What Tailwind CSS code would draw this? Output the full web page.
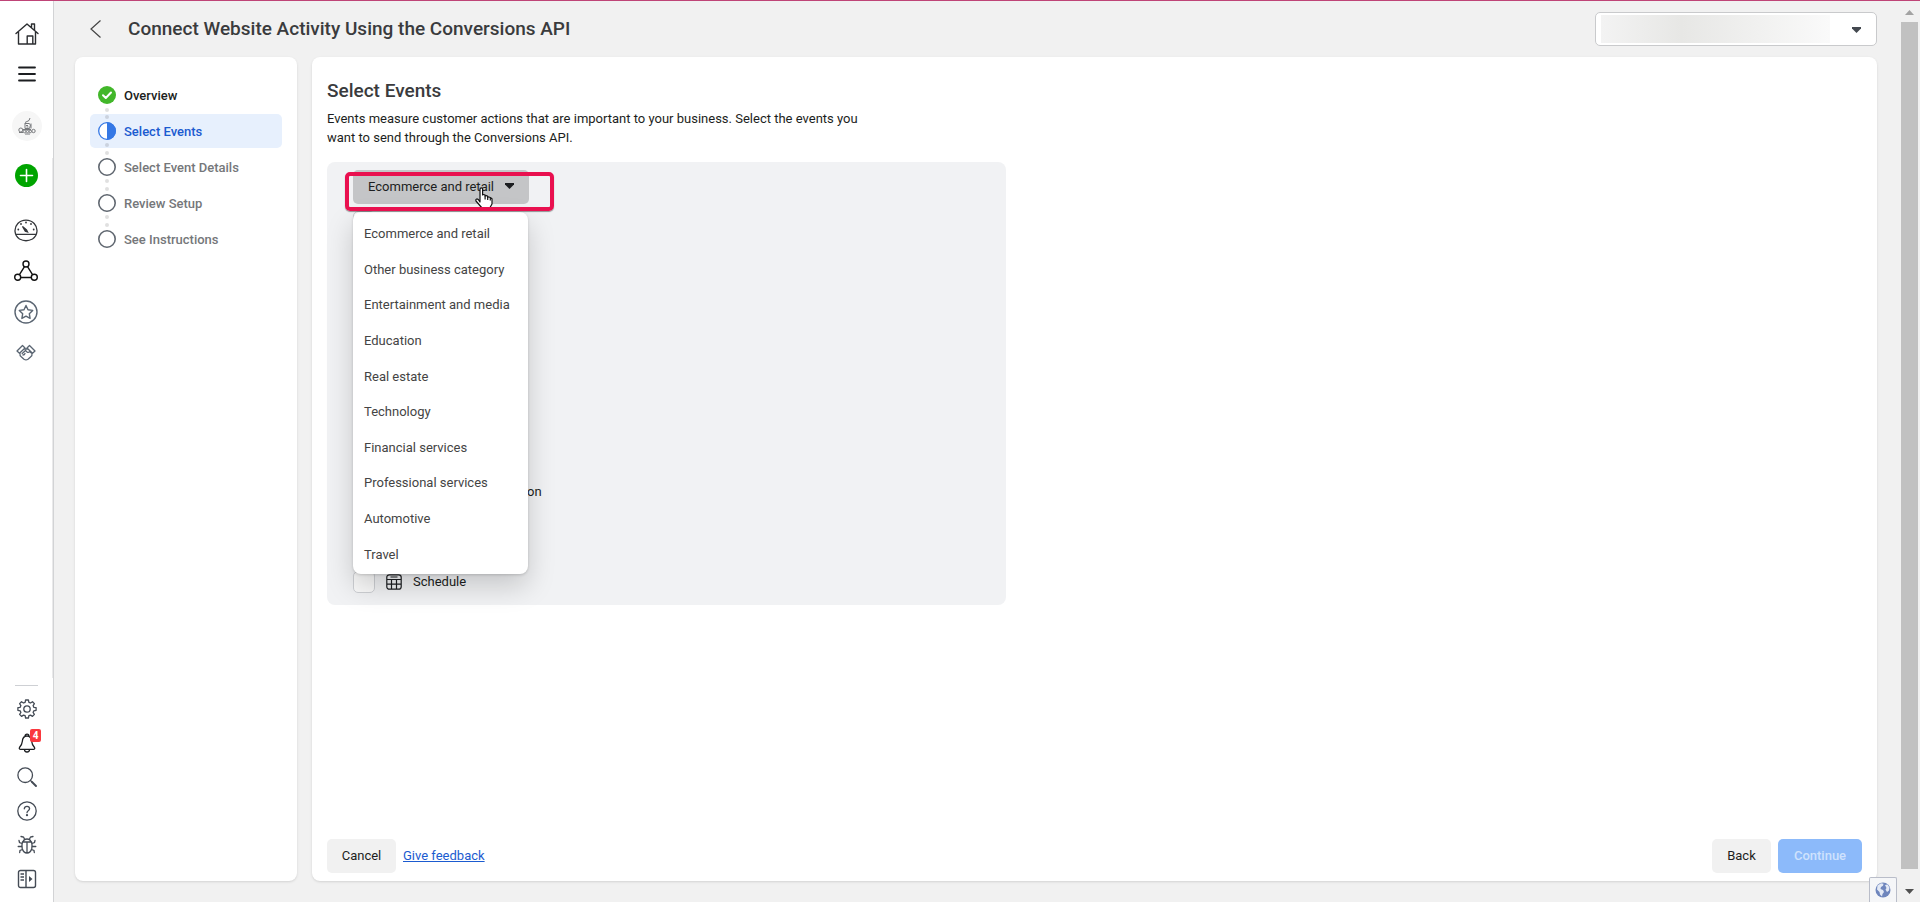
<!DOCTYPE html>
<html lang="en">
<head>
  <meta charset="UTF-8" />
  <meta name="viewport" content="width=device-width, initial-scale=1.0"/>
  <title>Connect Website Activity | Events Manager</title>
  <script src="https://cdn.jsdelivr.net/npm/@tailwindcss/browser@4"></script>
</head>
<body class="h-screen flex flex-col overflow-hidden border-t border-[#bf4477] bg-[#f1f1f1] font-['Roboto',sans-serif] text-[13px] leading-[19px] text-[#1c1e21]">

  <div class="flex flex-1 min-h-0">

    <!-- Sidebar -->
    <nav class="w-[54px] shrink-0 flex flex-col bg-white border-r border-[#d2d3d5] pt-[13px] pb-[6px] text-[#444b55]">
      <a href="#" aria-label="Home" class="h-10 flex items-center justify-center text-[#2b2d30]">
        <svg class="w-6 h-6" viewBox="0 0 24 24" fill="none" stroke="currentColor" stroke-width="1.4" stroke-linejoin="round" stroke-linecap="round"><path d="M1 11.500L12 2l11 9.500M3.500 10v12h17V10M16.500 5.500V2h3v6.200M12.200 22v-8h5.600v8"/></svg>
      </a>
      <button aria-label="Menu" class="h-10 flex items-center justify-center text-[#1c1e21]">
        <svg class="w-[18px] h-4" viewBox="0 0 18 16" fill="none" stroke="currentColor" stroke-width="1.800" stroke-linecap="round"><path d="M1 1.500h16M1 8h16M1 14.500h16"/></svg>
      </button>
      <a href="#" aria-label="Account" class="h-16 flex items-center justify-center">
        <span class="w-[30px] h-[30px] rounded-full bg-[#f6f6f6] flex items-center justify-center text-[#77797c]">
          <svg class="w-[18px] h-[18px]" viewBox="0 0 18 18" fill="none" stroke="currentColor" stroke-width="1"><path d="M7 5.500l4-2 1-2.500M6.500 6.500h5M7 7v4.500h4.500l1-3.500-1.500-1.500M8 8.500h2M8.500 10h2M5 12.500h8M13 6.500v5"/><circle cx="2.800" cy="13" r="2"/><circle cx="6.500" cy="14.500" r="1.300"/><circle cx="9.500" cy="14.500" r="1.200"/><circle cx="12.300" cy="14.500" r="1.200"/><circle cx="15.500" cy="14" r="1.700"/><path d="M1 15.500h4M7 17h5" /></svg>
        </span>
      </a>

      <div class="flex-1 flex flex-col border-r border-[#e9e9ea] mb-[7px]">
        <button aria-label="Create" class="h-[35px] mb-4 flex items-center justify-center">
          <svg class="w-[23px] h-[23px]" viewBox="0 0 23 23"><circle cx="11.500" cy="11.500" r="11.500" fill="#00a400"/><path d="M11.500 5.500v12M5.500 11.500h12" stroke="#fff" stroke-width="1.600" stroke-linecap="round"/></svg>
        </button>
        <a href="#" aria-label="Overview" class="h-[41px] flex items-center justify-center text-[#33363a]">
          <svg class="w-6 h-6" viewBox="0 0 24 24" fill="none" stroke="currentColor" stroke-width="1.300"><path d="M5.500 21a11 10.500 0 1 1 13 0q-6.500 3.500-13 0zM1.800 16.300h20.400"/><path d="M8.500 8.500l4 3.500 1 2-2.200-.7z" fill="currentColor"/><g fill="currentColor" stroke="none"><circle cx="12" cy="4.500" r=".9"/><circle cx="7" cy="6" r=".9"/><circle cx="17" cy="6" r=".9"/><circle cx="4.300" cy="11.500" r=".9"/><circle cx="19.700" cy="11.500" r=".9"/></g></svg>
        </a>
        <a href="#" aria-label="Data sources" class="h-[41px] flex items-center justify-center text-[#111]">
          <svg class="w-6 h-6" viewBox="0 0 24 24" fill="none" stroke="currentColor" stroke-width="1.400"><circle cx="12" cy="5" r="3"/><circle cx="3.700" cy="18.300" r="3"/><circle cx="20.300" cy="18.300" r="3"/><path d="M10.500 7.600L5.300 15.800M13.500 7.600l5.200 8.200M6.700 18.500h10.600"/></svg>
        </a>
        <a href="#" aria-label="Custom conversions" class="h-[41px] flex items-center justify-center text-[#5a6572]">
          <svg class="w-6 h-6" viewBox="0 0 24 24" fill="none" stroke="currentColor" stroke-width="1.400" stroke-linejoin="round"><circle cx="12" cy="12" r="11"/><path d="M12 5.500l2 4.300 4.700.6-3.400 3.300.8 4.700-4.100-2.300-4.100 2.300.8-4.700-3.400-3.300 4.700-.6z"/></svg>
        </a>
        <a href="#" aria-label="Partner integrations" class="h-[41px] flex items-center justify-center text-[#5a6572]">
          <svg class="w-5 h-5" viewBox="0 0 20 20" fill="none" stroke="currentColor" stroke-width="1.300" stroke-linejoin="round" stroke-linecap="round"><path d="M1 8l5.500-5.500L9 5 3.500 10.300zM19 8l-5.500-5.500L11 5l5.500 5.300zM4 10.500q-.5 2 1.500 3.500l2.500 2.300q2 1.200 4 0l2.500-2.300q2-1.500 1.500-3.500M8.500 6h3M6.200 10.500l3.300-3 1.500 1.500q1.500 1 2.500-.5l2.500 2M7 12q1.500 0 2-1.500"/></svg>
        </a>
      </div>

      <div class="mx-[15px] mb-[6px] h-px bg-[#ced0d4]"></div>
      <button aria-label="Settings" class="h-[34px] flex items-center justify-center">
        <svg class="w-5 h-5" viewBox="0 0 20 20" fill="none" stroke="currentColor" stroke-width="1.300" stroke-linejoin="round"><circle cx="10" cy="10" r="3.200"/><path d="M8.600 1h2.800l.5 2.300 1.600.7 2-1.300 1.900 1.900-1.300 2 .7 1.700 2.300.4v2.600l-2.300.5-.7 1.700 1.300 1.900-1.900 2-2-1.300-1.600.6-.5 2.300H8.600l-.5-2.300-1.600-.6-2 1.300-1.900-2 1.300-1.900-.7-1.700L.9 11.300V8.700l2.300-.4.7-1.700-1.300-2 1.900-1.900 2 1.300 1.600-.7z"/></svg>
      </button>
      <button aria-label="Notifications" class="relative h-[34px] flex items-center justify-center text-[#1c1e21]">
        <svg class="w-5 h-5" viewBox="0 0 20 20" fill="none" stroke="currentColor" stroke-width="1.300" stroke-linejoin="round"><path d="M8 3.200a2 2 0 0 1 4 0M10 3c-3.500 0-4.500 2.500-4.700 5.500-.2 2.700-1.500 4.500-2.800 6-.6 1 0 1.800 1 1.800h13c1 0 1.600-.8 1-1.800-1.300-1.500-2.600-3.300-2.800-6C14.500 5.500 13.500 3 10 3zM7.500 16.500a2.500 2.500 0 0 0 5 0"/></svg>
        <span class="absolute left-[30px] top-[3px] w-[11px] h-[13px] rounded-[2px] bg-[#fa383e] text-white text-[10px] leading-[13px] font-bold text-center">4</span>
      </button>
      <button aria-label="Search" class="h-[34px] flex items-center justify-center">
        <svg class="w-5 h-5" viewBox="0 0 20 20" fill="none" stroke="currentColor" stroke-width="1.300" stroke-linecap="round"><circle cx="8.200" cy="8.200" r="7.300"/><path d="M13.500 13.500l1.500 1.500"/><path d="M15 15l4 4" stroke-width="1.900"/></svg>
      </button>
      <button aria-label="Help" class="h-[34px] flex items-center justify-center">
        <svg class="w-5 h-5" viewBox="0 0 20 20" fill="none" stroke="currentColor" stroke-width="1.300" stroke-linecap="round"><circle cx="10" cy="10" r="9.200"/><path d="M7.300 7.800q.2-2.500 2.700-2.500t2.600 2.300q0 1.200-1.400 2.100-1.200.8-1.200 2"/><circle cx="10" cy="14.200" r=".5" fill="currentColor"/></svg>
      </button>
      <button aria-label="Report a bug" class="h-[34px] flex items-center justify-center">
        <svg class="w-5 h-5" viewBox="0 0 20 20" fill="none" stroke="currentColor" stroke-width="1.300" stroke-linecap="round"><path d="M5.500 7h9q1 3 .3 6.500Q13.500 18 10 18t-4.800-4.500Q4.500 10 5.500 7zM6 6.800Q7 4 10 4t4 2.800M10 7v11M7.500 4L6.500 2 4 1.500M12.500 4l1-2 2.500-.5M5 8.500L2.500 7.500 2 5.500M15 8.500l2.500-1 .5-2M4.800 11.500H1.200M15.200 11.500h3.600M5.500 14.500l-2.500 1-.3 2M14.500 14.500l2.500 1 .3 2"/></svg>
      </button>
      <button aria-label="Toggle panel" class="h-[34px] flex items-center justify-center">
        <svg class="w-5 h-5" viewBox="0 0 20 20" fill="none" stroke="currentColor" stroke-width="1.400"><rect x="1.500" y="1.500" width="17" height="17" rx="2"/><path d="M9 1.500v17M3.500 5h3.500M3.500 8h3.500M3.500 11h3.500"/><path d="M12 7l3.500 3-3.500 3z" fill="currentColor" stroke="none"/></svg>
      </button>
    </nav>

    <!-- Main column -->
    <div class="flex-1 min-w-0 flex flex-col pl-[21px] pr-[23px] pb-[21px]">
      <header class="h-14 shrink-0 flex items-center">
        <button aria-label="Go back" class="w-[53px] pl-[15px] text-[#444]">
          <svg class="w-3 h-[18px]" viewBox="0 0 12 18" fill="none" stroke="currentColor" stroke-width="1.200"><path d="M10.500.5L1 9l9.500 8.500"/></svg>
        </button>
        <h1 class="flex-1 text-[19px] leading-6 font-medium text-[#3a3b3d]">Connect Website Activity Using the Conversions API</h1>
        <div class="relative w-[282px] h-[34px]">
          <select aria-label="Ad account" class="w-full h-full appearance-none rounded-[5px] border border-[#c9cacc] bg-white">
            <option></option>
          </select>
          <div class="absolute left-[6px] top-[3px] w-[229px] h-7 pointer-events-none bg-linear-to-r from-[#f3f3f3] via-[#e7e7e5] via-35% to-[#fafafa]"></div>
          <svg class="absolute right-4 top-[15px] w-[9px] h-[6px] pointer-events-none" viewBox="0 0 9 6" fill="#444950"><path d="M0 0h9v1.500L4.500 6 0 1.500z"/></svg>
        </div>
      </header>

      <div class="flex-1 min-h-0 flex gap-[15px]">
        <!-- Steps -->
        <aside class="w-[222px] shrink-0 bg-white rounded-lg shadow-sm px-[15px] pt-[21px]">
          <ol class="flex flex-col gap-[2px] font-medium text-[#75777a]">
            <li class="relative h-[34px] flex items-center gap-2 px-2 text-[#1c1e21]">
              <svg class="w-[18px] h-[18px]" viewBox="0 0 18 18"><circle cx="9" cy="9" r="9" fill="#42b72a"/><path d="M5 9.300l2.800 2.700L13 6.500" fill="none" stroke="#fff" stroke-width="2" stroke-linecap="round" stroke-linejoin="round"/></svg>
              Overview
              <span class="absolute z-10 left-[15px] top-[30px] flex flex-col gap-[3px]"><i class="w-1 h-1 rounded-full bg-black/12"></i><i class="w-1 h-1 rounded-full bg-black/12"></i></span>
            </li>
            <li aria-current="step" class="relative h-[34px] flex items-center gap-2 px-2 rounded-[5px] bg-[#e7f0fd] text-[#1b5bd0]">
              <svg class="w-[18px] h-[18px]" viewBox="0 0 18 18"><circle cx="9" cy="9" r="8.300" fill="#fff" stroke="#3578e5" stroke-width="1.300"/><path d="M9 0a9 9 0 0 1 0 18z" fill="#3578e5"/></svg>
              Select Events
              <span class="absolute z-10 left-[15px] top-[29px] flex flex-col gap-1"><i class="w-1 h-1 rounded-full bg-black/12"></i><i class="w-1 h-1 rounded-full bg-black/12"></i></span>
            </li>
            <li class="relative h-[34px] flex items-center gap-2 px-2">
              <svg class="w-[18px] h-[18px]" viewBox="0 0 18 18"><circle cx="9" cy="9" r="8.200" fill="none" stroke="#606770" stroke-width="1.600"/></svg>
              Select Event Details
              <span class="absolute z-10 left-[15px] top-[29px] flex flex-col gap-1"><i class="w-1 h-1 rounded-full bg-black/12"></i><i class="w-1 h-1 rounded-full bg-black/12"></i></span>
            </li>
            <li class="relative h-[34px] flex items-center gap-2 px-2">
              <svg class="w-[18px] h-[18px]" viewBox="0 0 18 18"><circle cx="9" cy="9" r="8.200" fill="none" stroke="#606770" stroke-width="1.600"/></svg>
              Review Setup
              <span class="absolute z-10 left-[15px] top-[29px] flex flex-col gap-1"><i class="w-1 h-1 rounded-full bg-black/12"></i><i class="w-1 h-1 rounded-full bg-black/12"></i></span>
            </li>
            <li class="relative h-[34px] flex items-center gap-2 px-2">
              <svg class="w-[18px] h-[18px]" viewBox="0 0 18 18"><circle cx="9" cy="9" r="8.200" fill="none" stroke="#606770" stroke-width="1.600"/></svg>
              See Instructions
            </li>
          </ol>
        </aside>

        <!-- Content -->
        <main class="flex-1 min-w-0 flex flex-col bg-white rounded-lg shadow-sm px-[15px] pt-[22px] pb-2">
          <h2 class="text-[19px] leading-6 font-medium text-[#3a3b3d]">Select Events</h2>
          <p class="mt-[6px] max-w-[560px]">Events measure customer actions that are important to your business. Select the events you want to send through the Conversions API.</p>

          <section class="relative mt-[15px] w-[679px] max-w-full rounded-lg bg-[#f1f2f4] px-[26px] py-2">
            <button aria-haspopup="listbox" aria-expanded="true" aria-controls="categories" class="w-[176px] h-[34px] rounded-[5px] bg-[#c4c5c7] flex items-center justify-between px-[15px] pb-[2px]">
              Ecommerce and retail
              <svg class="w-[9px] h-[6px]" viewBox="0 0 9 6" fill="#1c1e21"><path d="M0 0h9v1.500L4.500 6 0 1.500z"/></svg>
            </button>

            <ul id="events" class="mt-[3px]"></ul>

            <!-- Open category menu -->
            <ul id="categories" role="listbox" aria-label="Business category" class="absolute left-[26px] top-[50px] z-10 w-[175px] h-[362px] flex flex-col pt-1 pb-[2px] rounded-lg bg-white text-[#444] shadow-[0_12px_28px_rgba(0,0,0,0.18),0_1px_3px_rgba(0,0,0,0.16)]"></ul>

            <!-- Pointer and highlight frame -->
            <svg class="absolute left-[148px] top-[25px] z-20 w-[18px] h-6" viewBox="0 0 18 24" fill="#fff" stroke="#111" stroke-width="1.200" stroke-linejoin="round"><path d="M5 13V2.200Q5 .8 6.300.8T7.600 2.200V8q1-1 2.500 0v1q1.500-1 2.600.3v1q1.600-.7 2.600.3l1.700 1.200V17l-2 3.500V23H7v-2L1 14q-.6-1.500.7-2T5 15z"/><path d="M10.100 8.500v4M12.700 9.500v3.500M15.300 11v2.500" fill="none"/></svg>
            <div class="absolute left-[18px] top-[10px] z-20 w-[209px] h-[39px] rounded-[5px] border-4 border-[#e9104f] shadow-[0_1px_1px_rgba(0,0,0,0.4)] pointer-events-none"></div>
          </section>

          <footer class="mt-auto flex items-center gap-[7px]">
            <button class="h-[34px] w-[69px] pb-[2px] rounded-[5px] bg-[#f1f1f1]">Cancel</button>
            <a href="#" class="pb-[2px] text-[#1b5bd0] underline">Give feedback</a>
            <button class="ml-auto h-[34px] w-[59px] pb-[2px] rounded-[5px] bg-[#f1f1f1]">Back</button>
            <button disabled class="h-[34px] w-[84px] pb-[2px] rounded-[5px] bg-[#8cbafa] text-[#cfe2fd] font-medium">Continue</button>
          </footer>
        </main>
      </div>
    </div>

    <!-- Scrollbar -->
    <div aria-hidden="true" class="relative w-5 shrink-0 flex flex-col items-center pr-px">
      <svg class="mt-[9px] mb-[7px] w-[9px] h-[5px]" viewBox="0 0 9 5" fill="#a3a3a3"><path d="M4.500 0L9 5H0z"/></svg>
      <div class="flex-1 w-[17px] bg-[#c1c1c1]"></div>
      <svg class="mt-5 mb-2 w-[9px] h-[5px]" viewBox="0 0 9 5" fill="#505050"><path d="M0 0h9L4.500 5z"/></svg>
      <div class="absolute right-[23px] bottom-0 w-7 h-[25px] border border-b-0 border-[#b9bdc9] rounded-t-[2px] bg-[#f5f6f8] flex items-center justify-center">
        <svg class="w-4 h-4" viewBox="0 0 16 16"><circle cx="8" cy="8" r="7.500" fill="#6f86bd"/><path d="M2.500 3.500L6 1.300l2.500.5-.5 2-2 1.200-.5 2 2.500 1 1 2-1.500 2-.5 2.500-2-2-.5-2.500L2 7.500zM10 3l2.500-.5 2 3-.5 3-2 1.500-1.500-2.500L11.500 6z" fill="#e3e9f5"/></svg>
      </div>
    </div>
  </div>

  <script>
    const categories = [
      "Ecommerce and retail", "Other business category", "Entertainment and media", "Education", "Real estate",
      "Technology", "Financial services", "Professional services", "Automotive", "Travel"
    ];
    const events = [
      "Purchase", "Add to cart", "Initiate checkout", "Add payment info", "Add to wishlist", "View content", "Search",
      "Lead", "Contact", "Complete Registration", "Subscribe", "Start trial", "Schedule"
    ];

    document.getElementById("categories").innerHTML = categories.map(name =>
      `<li role="option" class="flex-1 flex items-center px-[11px]">${name}</li>`
    ).join("");

    document.getElementById("events").innerHTML = events.map(name => `
      <li>
        <label class="h-[30px] flex items-center">
          <input type="checkbox" class="appearance-none w-[22px] h-[22px] rounded-[5px] border border-[#ced0d4] bg-[#fafafa]">
          <svg class="ml-[11px] mr-[11px] w-4 h-4" viewBox="0 0 16 16" fill="none" stroke="#1c1e21" stroke-width="1.200"><rect x=".8" y=".8" width="14.400" height="14.400" rx="2.500"/><path d="M4.500 3h7M1 5.500h14M1 10.200h14M5.500 5.500V15M10.500 5.500V15"/></svg>
          <span class="pb-[2px]">${name}</span>
        </label>
      </li>`
    ).join("");
  </script>
</body>
</html>
